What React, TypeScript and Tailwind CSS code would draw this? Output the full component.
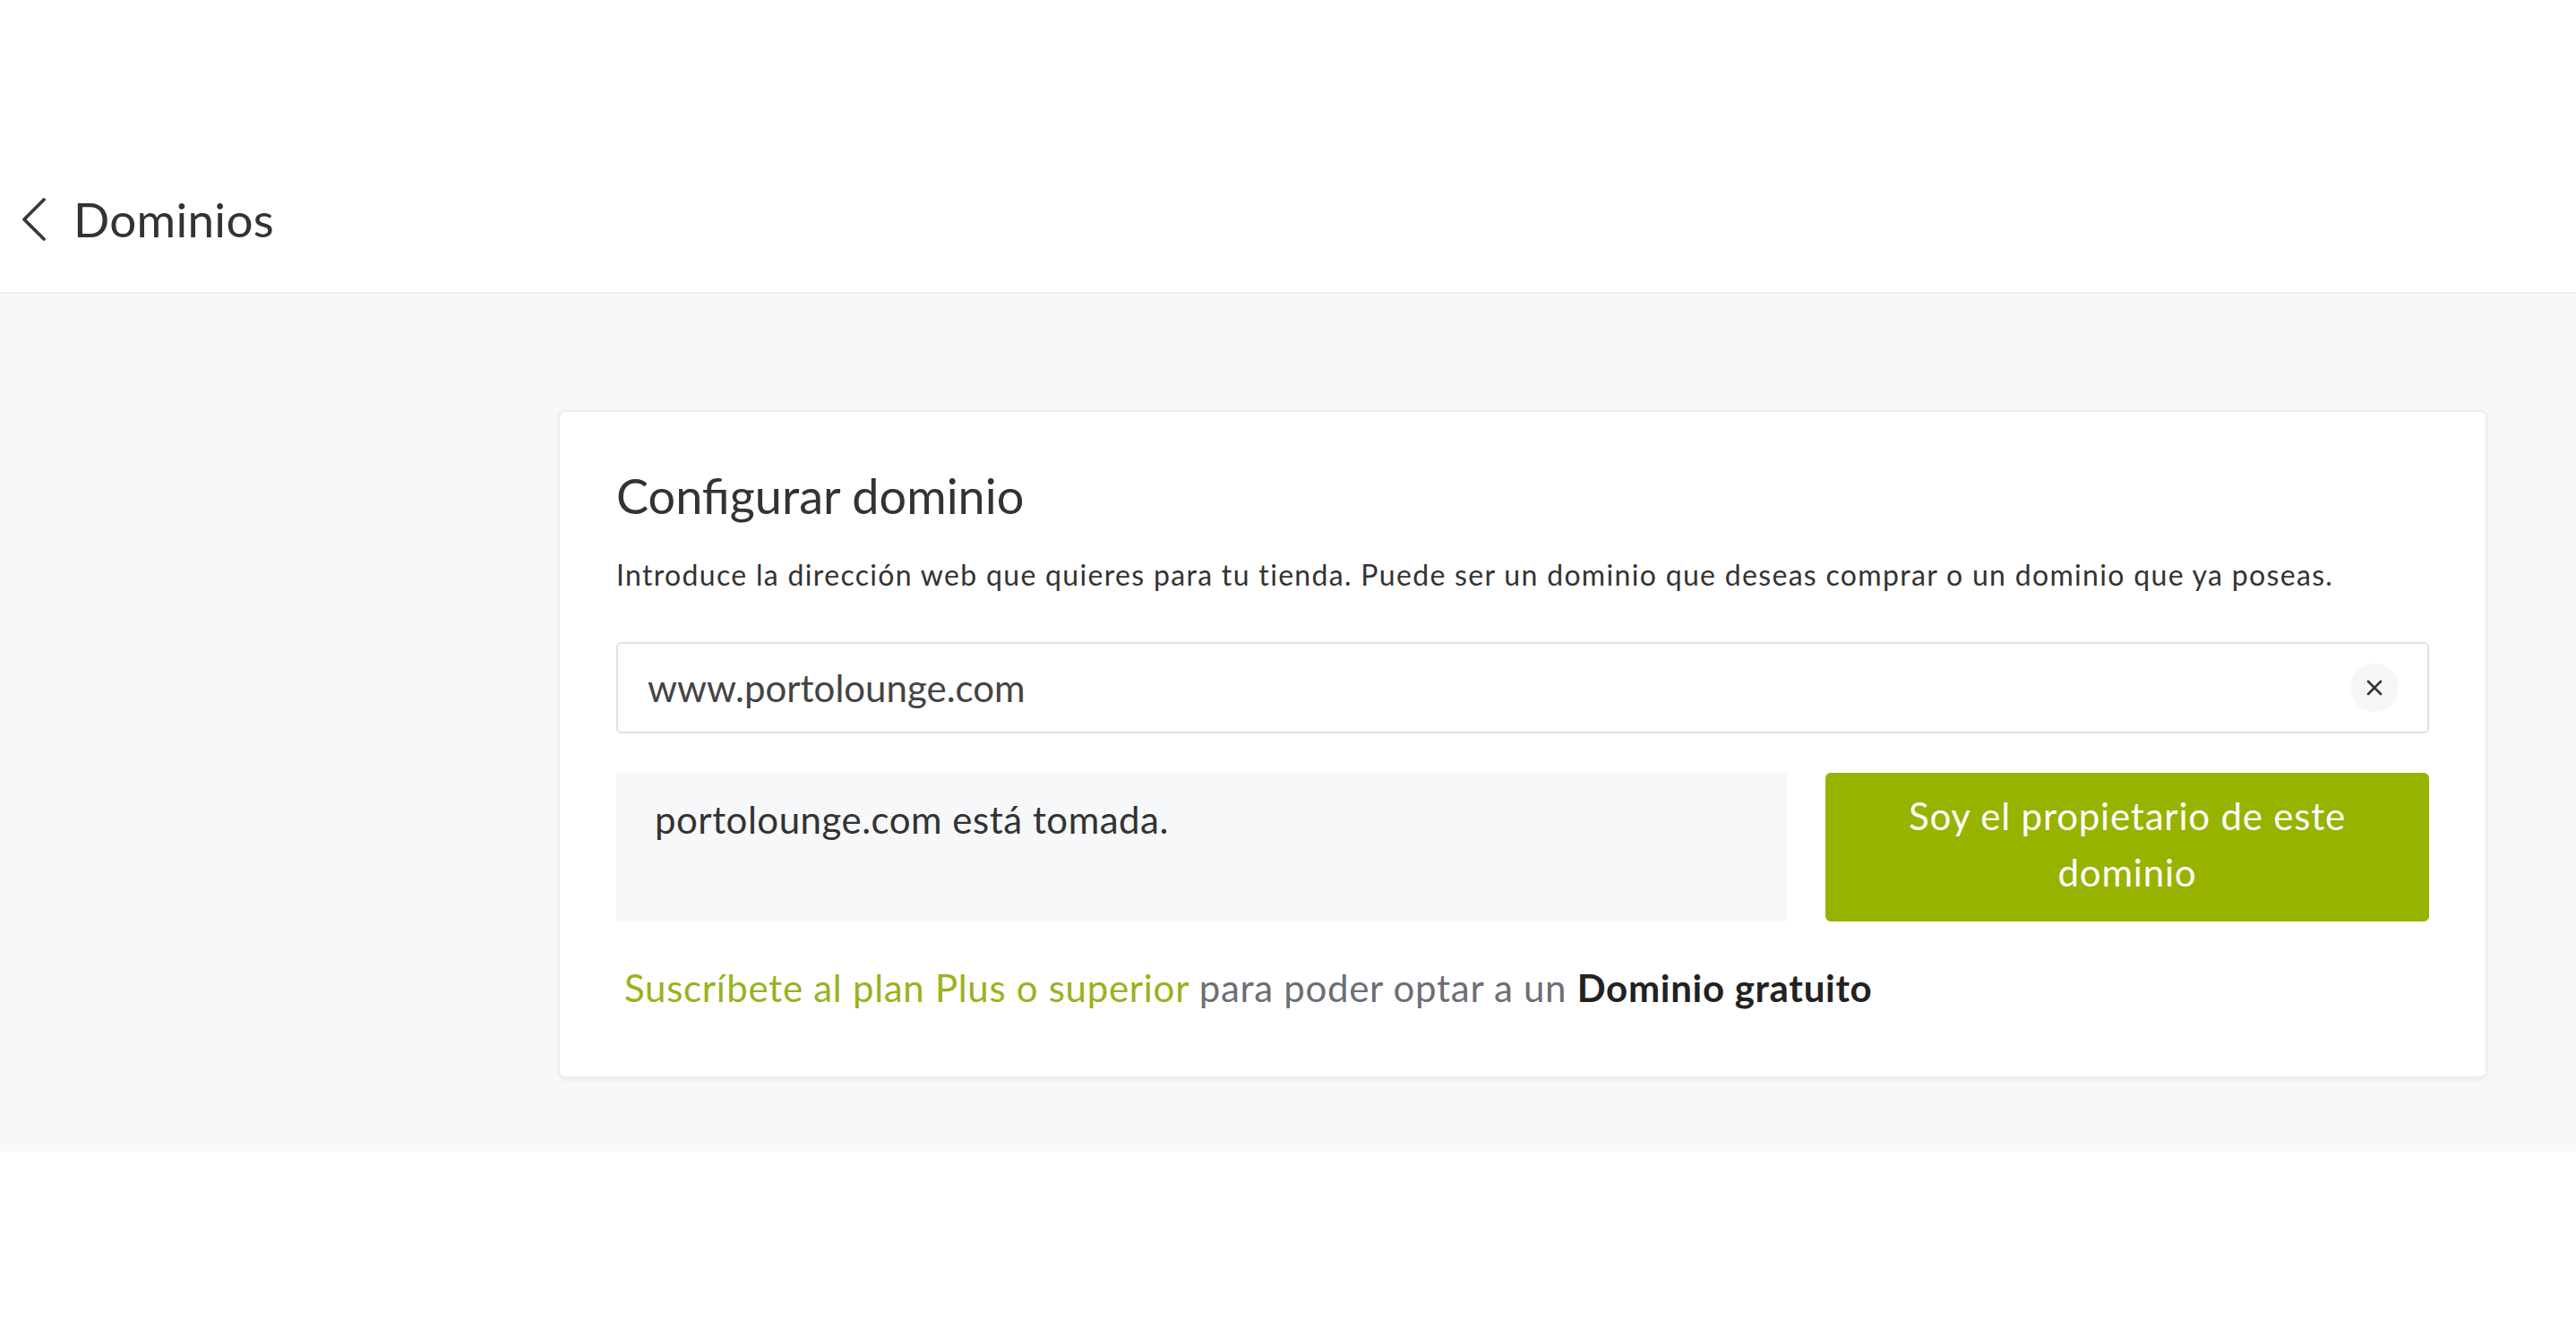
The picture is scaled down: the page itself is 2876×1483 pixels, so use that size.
import { useState } from "react";

export default function App() {
  const [domain, setDomain] = useState("www.portolounge.com");

  return (
    <div className="min-h-screen bg-white font-['Lato',sans-serif] text-[#333]">
      {/* Cabecera */}
      <div className="h-[328px] border-b-2 border-[#eceef1] pt-[214px]">
        <div className="flex h-[62px] items-center pl-[23px]">
          <svg width="30" height="50" viewBox="0 0 30 50" className="mr-[29px]">
            <polyline
              points="26,3 4,25 26,47"
              fill="none"
              stroke="#3a3a3a"
              strokeWidth="3.8"
              strokeLinecap="round"
              strokeLinejoin="round"
            />
          </svg>
          <h1 className="text-[53px] leading-[1.2] tracking-[0.3px] text-[#333]">Dominios</h1>
        </div>
      </div>

      {/* Contenido */}
      <div className="bg-[#f7f8fa] pb-[82px] pl-[623px] pt-[130px]">
        <div className="w-[2154px] rounded-[8px] border-2 border-[#eceef0] bg-white px-[63px] pb-[73px] pt-[62px] shadow-[0_2px_4px_rgba(0,0,0,0.06)]">
          <h2 className="text-[54px] leading-[1.2] text-[#333]">Configurar dominio</h2>
          <p className="mt-[36px] text-[32px] leading-[1.2] tracking-[1.32px] text-[#333]">
            Introduce la dirección web que quieres para tu tienda. Puede ser un dominio que deseas comprar o un
            dominio que ya poseas.
          </p>

          {/* Campo de dominio */}
          <div className="mt-[56px] flex h-[102px] items-center rounded-[6px] border-2 border-[#dde1e6] pl-[33px] pr-[32px]">
            <input
              type="text"
              value={domain}
              onChange={(e) => setDomain(e.target.value)}
              className="flex-1 bg-transparent text-[42px] text-[#444] outline-none"
            />
            <button
              className="flex h-[54px] w-[54px] items-center justify-center rounded-full bg-[#f5f6f8]"
              onClick={() => setDomain("")}
            >
              <svg width="20" height="20" viewBox="0 0 20 20">
                <path d="M3 3 L17 17 M17 3 L3 17" stroke="#333" strokeWidth="2.6" strokeLinecap="round" />
              </svg>
            </button>
          </div>

          {/* Estado y botón */}
          <div className="mt-[44px] flex h-[166px] gap-[43px]">
            <div className="w-[1307px] bg-[#f7f8fa] pl-[43px] pt-[21px] text-[42px] leading-[63px] tracking-[0.5px] text-[#333]">
              portolounge.com está tomada.
            </div>
            <button className="flex flex-1 flex-col items-center justify-start self-stretch rounded-[6px] bg-[#97b300] px-[40px] pt-[17px] text-center text-[42px] leading-[63px] tracking-[0.8px] text-white">
              <span>Soy el propietario de este</span>
              <span>dominio</span>
            </button>
          </div>

          <p className="mt-[49px] pl-[9px] text-[42px] leading-[1.2] tracking-[0.7px] text-[#6b6f76]">
            <a className="text-[#97b31d]">Suscríbete al plan Plus o superior</a> para poder optar a un{" "}
            <b className="font-bold text-[#222]">Dominio gratuito</b>
          </p>
        </div>
      </div>
    </div>
  );
}
